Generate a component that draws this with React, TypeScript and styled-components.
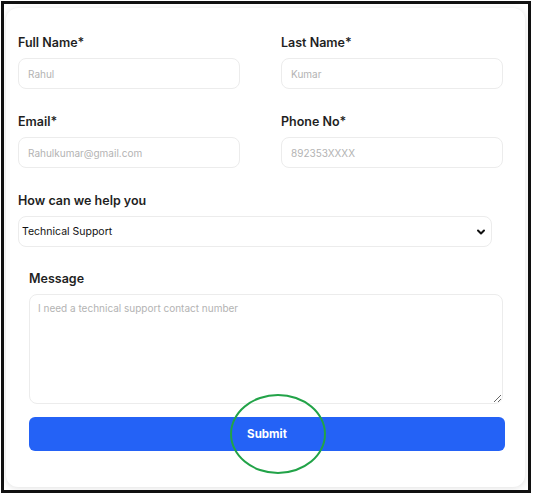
import styled, { createGlobalStyle } from "styled-components";
import { ChevronDown } from "lucide-react";

const GlobalStyle = createGlobalStyle`
  * { box-sizing: border-box; }
  body {
    margin: 0;
    background: #ffffff;
    font-family: Inter, "Noto Sans", Arial, sans-serif;
    color: #1f1f1f;
  }
`;

const Frame = styled.div`
  width: 530px;
  height: 492px;
  margin: 1px 0 0 1px;
  border: 3px solid #111;
  padding: 4px 3px 3px 2px;
  background: #fff;
`;

const Card = styled.form`
  height: 100%;
  background: #fff;
  border-radius: 12px;
  box-shadow: 0 1px 6px rgba(0, 0, 0, 0.12);
  padding: 27px 0 0 12px;
  display: flex;
  flex-direction: column;
`;

const Grid = styled.div`
  display: grid;
  grid-template-columns: 222px 222px;
  column-gap: 41px;
  row-gap: 25px;
`;

const Field = styled.div<{ $indent?: number; $top?: number }>`
  display: flex;
  flex-direction: column;
  gap: 7px;
  margin-left: ${(p) => p.$indent ?? 0}px;
  margin-top: ${(p) => p.$top ?? 0}px;
`;

const Label = styled.label`
  font-size: 12.5px;
  font-weight: 600;
  line-height: 16px;
  color: #1f1f1f;
`;

const Input = styled.input`
  height: 31px;
  width: 100%;
  border: 1px solid #ececec;
  border-radius: 8px;
  padding: 0 9px;
  font-family: inherit;
  font-size: 10px;
  color: #222;
  outline: none;
  background: #fff;

  &::placeholder {
    color: #b3b3b3;
  }
`;

const SelectWrap = styled.div`
  position: relative;
  width: 474px;
`;

const Select = styled.select`
  appearance: none;
  width: 100%;
  height: 31px;
  border: 1px solid #ececec;
  border-radius: 8px;
  padding: 0 3px;
  font-family: inherit;
  font-size: 10.5px;
  color: #111;
  background: #fff;
  outline: none;
`;

const Chevron = styled.span`
  position: absolute;
  right: 5px;
  top: 10px;
  display: flex;
  pointer-events: none;
  color: #111;
`;

const TextArea = styled.textarea`
  width: 474px;
  height: 110px;
  border: 1px solid #ececec;
  border-radius: 8px;
  padding: 7px 8px;
  font-family: inherit;
  font-size: 10px;
  outline: none;
  resize: vertical;

  &::placeholder {
    color: #b3b3b3;
  }
`;

const ButtonWrap = styled.div`
  position: relative;
  margin: 13px 0 0 11px;
  width: 476px;
`;

const SubmitButton = styled.button`
  width: 100%;
  height: 34px;
  border: none;
  border-radius: 6px;
  background: #2462f6;
  color: #fff;
  font-family: inherit;
  font-size: 11.5px;
  font-weight: 700;
  cursor: pointer;
`;

const Highlight = styled.span`
  position: absolute;
  left: 201px;
  top: -23px;
  width: 96px;
  height: 80px;
  border: 2px solid #22a348;
  border-radius: 50%;
  pointer-events: none;
`;

export default function App() {
  return (
    <>
      <GlobalStyle />
      <Frame>
        <Card onSubmit={(e) => e.preventDefault()}>
          <Grid>
            <Field>
              <Label>Full Name*</Label>
              <Input placeholder="Rahul" />
            </Field>
            <Field>
              <Label>Last Name*</Label>
              <Input placeholder="Kumar" />
            </Field>
            <Field>
              <Label>Email*</Label>
              <Input placeholder="Rahulkumar@gmail.com" />
            </Field>
            <Field>
              <Label>Phone No*</Label>
              <Input placeholder="892353XXXX" />
            </Field>
          </Grid>

          <Field $top={25}>
            <Label>How can we help you</Label>
            <SelectWrap>
              <Select defaultValue="tech">
                <option value="tech">Technical Support</option>
                <option value="sales">Sales</option>
                <option value="other">Other</option>
              </Select>
              <Chevron>
                <ChevronDown size={12} strokeWidth={4} />
              </Chevron>
            </SelectWrap>
          </Field>

          <Field $indent={11} $top={24}>
            <Label>Message</Label>
            <TextArea placeholder="I need a technical support contact number" />
          </Field>

          <ButtonWrap>
            <SubmitButton type="submit">Submit</SubmitButton>
            <Highlight />
          </ButtonWrap>
        </Card>
      </Frame>
    </>
  );
}
